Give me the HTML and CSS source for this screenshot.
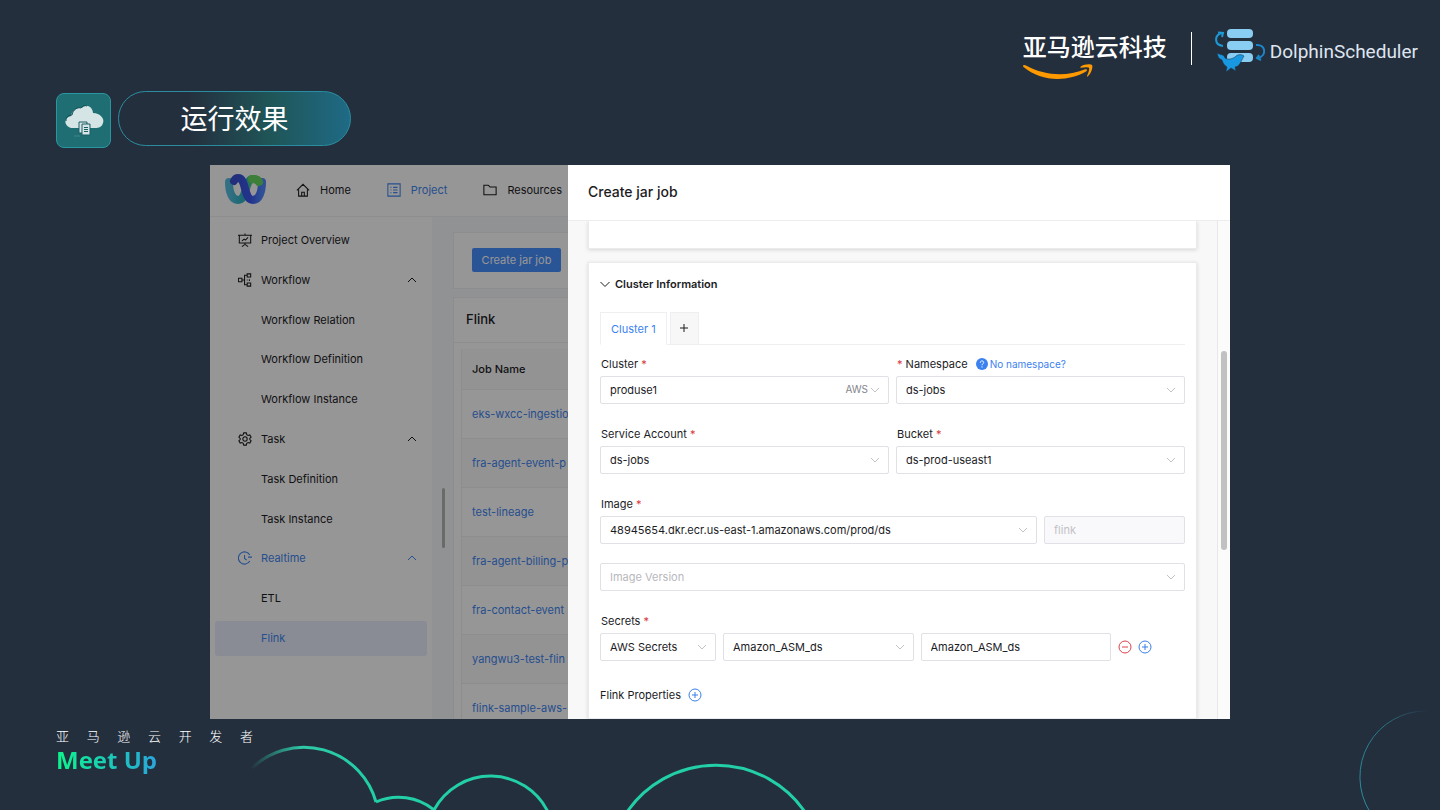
FILE: index.html
```html
<!DOCTYPE html>
<html lang="zh-CN">
<head>
    <meta charset="UTF-8">
    <meta name="viewport" content="width=device-width, initial-scale=1.0">
    <title>运行效果</title>
    <link rel="stylesheet" href="styles.css">
</head>
<body>
    <div class="slide">
        <header class="brand">
            <div class="aws">
                <span>亚马逊云科技</span>
                <svg class="smile" viewBox="0 0 70 16" width="70" height="16">
                    <path d="M0 1.500C1 0.500 2 1 3.500 1.800C22 12 44 12.500 61.500 5.500C64 4.500 65 6.300 63 7.500C45 18 18 18 0.500 3C0 2.500-0.300 2 0 1.500Z" fill="#f90"/>
                    <path d="M57.500 2.800C61 0 67.500-0.200 69 1C70.200 2.500 68.500 9.500 64.800 12.400C64.200 12.800 63.800 12.400 64 11.900C65 9.500 66.800 5.200 66 4C65.200 2.900 61 3.400 58 3.700C57.200 3.800 57 3.200 57.500 2.800Z" fill="#f90"/>
                </svg>
            </div>
            <div class="divider"></div>
            <div class="dolphin">
                <svg viewBox="0 0 50 44" width="50" height="44">
                    <g fill="#8acdf2">
                        <rect x="12" y="1" width="26" height="9" rx="4"/>
                        <rect x="12" y="13" width="26" height="9" rx="4"/>
                        <rect x="12" y="25" width="26" height="9" rx="4"/>
                    </g>
                    <path d="M8 18C-1 17 -1 7 7 5M3 4.500l5 0.500-1 4" fill="none" stroke="#1c9ad6" stroke-width="2"/>
                    <path d="M41 17C51 16 52 28 43 30M46 32l-4-2 2-3" fill="none" stroke="#1b87c9" stroke-width="2"/>
                    <path d="M2 25C5 27 9 26 10 30C13 32 17 31 20 29C23 26 26 26 29 28C27 31 26 35 23 38L20 39 21 43 16 40 11 44 12 39C9 37 8 35 7 32C4 31 3 29 2 25Z" fill="#1798e0" stroke="#242f3e" stroke-width="0.500"/>
                </svg>
                <span>DolphinScheduler</span>
            </div>
        </header>

        <div class="title-row">
            <div class="title-icon">
                <svg viewBox="0 0 54 54" width="54" height="54">
                    <path d="M14 34C7 32 6 24 14 22C15 16 21 13 25 14C29 9 36 13 36 19C43 19 48 25 46 29C45 33 42 34 38 34H17Z" fill="#d5e5e5"/>
                    <path d="M9 27C9 23 11 21 15 21C16 15 21 13 24 14C25 12 28 11 30 12" fill="none" stroke="#174f57" stroke-width="1"/>
                    <path d="M22 28h8v11h-8z" fill="#d5e5e5" stroke="#1d5d66" stroke-width="1"/>
                    <path d="M25 30h8v11h-8z" fill="#d5e5e5" stroke="#1d5d66" stroke-width="1"/>
                    <path d="M27 33.500h4M27 35.500h4M27 37.500h4" stroke="#1d5d66" stroke-width="1"/>
                    <path d="M17 42h6" stroke="#5fa3a5" stroke-width="0.500"/>
                </svg>
            </div>
            <h1>运行效果</h1>
        </div>

        <main class="app">
            <div class="page">
                <nav class="topbar">
                    <svg class="logo" viewBox="0 0 41 34" width="41" height="34">
                        <defs>
                            <linearGradient id="teal" x1="0" y1="0" x2="1" y2="0">
                                <stop offset="0" stop-color="#58bfe0"/>
                                <stop offset="0.450" stop-color="#2fb2c4"/>
                                <stop offset="1" stop-color="#68d860"/>
                            </linearGradient>
                            <linearGradient id="blue" x1="0" y1="0" x2="1" y2="0">
                                <stop offset="0" stop-color="#3b50d0"/>
                                <stop offset="0.600" stop-color="#3c58f0"/>
                                <stop offset="1" stop-color="#5088ff"/>
                            </linearGradient>
                        </defs>
                        <path d="M4 9C4 19 7 27 13 27C23 27 19 6 28 6C31 6 33 7 34 9" fill="none" stroke="url(#teal)" stroke-width="8" stroke-linecap="round"/>
                        <path d="M9 8C10 6 11 5 13 5C22 5 18 27 28 27C34 27 37 19 37 9" fill="none" stroke="url(#blue)" stroke-width="8" stroke-linecap="round"/>
                        <path d="M27 6C31 6 33 7 34 9" fill="none" stroke="#68d860" stroke-width="8" stroke-linecap="round"/>
                    </svg>
                    <a href="#">
                        <svg class="icon" viewBox="0 0 16 16"><path d="M1 8.500L8 1.500l7 7M3 7.500V15h10V7.500M6.500 15v-4.500h3V15"/></svg>
                        Home
                    </a>
                    <a href="#" class="active">
                        <svg class="icon" viewBox="0 0 16 16"><path d="M1 1h14v14H1zM4 5h1M4 8h1M4 11h1M7 5h5M7 8h5M7 11h5"/></svg>
                        Project
                    </a>
                    <a href="#">
                        <svg class="icon" viewBox="0 0 16 16"><path d="M1 2.500h5l2 2h7v9H1z"/></svg>
                        Resources
                    </a>
                </nav>
                <div class="columns">
                    <nav class="sidebar">
                        <a href="#" class="item">
                            <svg class="icon" viewBox="0 0 16 16"><path d="M0 2.500h16M1.500 2.500v9h13v-9M8 0.500v2M8 11.500v2M4.500 15.500L8 13l3.500 2.500M4.500 9l2.500-2 1.500 1L11.500 5"/></svg>
                            Project Overview
                        </a>
                        <a href="#" class="item">
                            <svg class="icon" viewBox="0 0 16 16"><path d="M0.500 6h4v4h-4zM4.500 8h3M10 2.500H7.500v11H10M10.500 1h4v3.500h-4zM10.500 11.500h4V15h-4zM10 8h1M13 7v2"/></svg>
                            Workflow
                            <svg class="chevron" viewBox="0 0 10 10"><path d="M1 7l4-4 4 4"/></svg>
                        </a>
                        <a href="#" class="item">Workflow Relation</a>
                        <a href="#" class="item">Workflow Definition</a>
                        <a href="#" class="item">Workflow Instance</a>
                        <a href="#" class="item">
                            <svg class="icon" viewBox="0 0 16 16"><path d="M6.500 1h3l0.500 2 1.500 1 2-0.700 1.500 2.600L13.500 7.300v1.400L15 10.100l-1.500 2.600-2-0.700L10 13l-0.500 2h-3L6 13l-1.500-1-2 0.700L1 10.100l1.500-1.400V7.300L1 5.900l1.500-2.600 2 0.700L6 3z"/><circle cx="8" cy="8" r="2.500"/></svg>
                            Task
                            <svg class="chevron" viewBox="0 0 10 10"><path d="M1 7l4-4 4 4"/></svg>
                        </a>
                        <a href="#" class="item">Task Definition</a>
                        <a href="#" class="item">Task Instance</a>
                        <a href="#" class="item active">
                            <svg class="icon" viewBox="0 0 16 16"><path d="M13.500 4.500A7 7 0 1 0 13.500 11.500M7.500 4.500V8.500L10 10.500M11.500 7h4.500"/></svg>
                            Realtime
                            <svg class="chevron" viewBox="0 0 10 10"><path d="M1 7l4-4 4 4"/></svg>
                        </a>
                        <a href="#" class="item">ETL</a>
                        <a href="#" class="item active selected">Flink</a>
                    </nav>
                    <div class="content">
                        <div class="page-thumb"></div>
                        <section class="panel toolbar">
                            <button type="button" class="primary">Create jar job</button>
                        </section>
                        <section class="panel jobs">
                            <h2>Flink</h2>
                            <table>
                                <thead>
                                    <tr><th>Job Name</th></tr>
                                </thead>
                                <tbody>
                                    <tr><td><a href="#">eks-wxcc-ingestio</a></td></tr>
                                    <tr><td><a href="#">fra-agent-event-p</a></td></tr>
                                    <tr><td><a href="#">test-lineage</a></td></tr>
                                    <tr><td><a href="#">fra-agent-billing-p</a></td></tr>
                                    <tr><td><a href="#">fra-contact-event</a></td></tr>
                                    <tr><td><a href="#">yangwu3-test-flin</a></td></tr>
                                    <tr><td><a href="#">flink-sample-aws-</a></td></tr>
                                </tbody>
                            </table>
                        </section>
                    </div>
                </div>
            </div>

            <aside class="drawer">
                <h2 class="drawer-title">Create jar job</h2>
                <div class="drawer-body">
                    <div class="cards">
                        <section class="card card-empty"></section>
                        <section class="card card-cluster">
                            <h3>
                                <svg class="chevron" viewBox="0 0 10 10"><path d="M0.500 3L5 7.500 9.500 3"/></svg>
                                Cluster Information
                            </h3>
                            <div class="tabs">
                                <button type="button" class="tab">Cluster 1</button>
                                <button type="button" class="tab-add" aria-label="Add cluster">
                                    <svg viewBox="0 0 10 10" width="10" height="10"><path d="M5 1v8M1 5h8"/></svg>
                                </button>
                            </div>
                            <form class="form">
                                <div class="row two">
                                    <div class="field">
                                        <label for="cluster">Cluster <i>*</i></label>
                                        <div class="select">
                                            <select id="cluster"><option>produse1</option></select>
                                            <span class="suffix">AWS</span>
                                            <svg class="arrow" viewBox="0 0 10 10"><path d="M1 3l4 4 4-4"/></svg>
                                        </div>
                                    </div>
                                    <div class="field">
                                        <div class="label-row">
                                            <label for="namespace"><i>*</i> Namespace</label>
                                            <a href="#" class="help">
                                                <svg viewBox="0 0 12 12" width="12" height="12"><circle cx="6" cy="6" r="6" fill="#3b82f0"/><path d="M4.300 4.700C4.300 2.300 7.800 2.400 7.700 4.600C7.700 5.700 6 5.700 6 7.200M6 8.300v1.200" fill="none" stroke="#fff" stroke-width="1"/></svg>
                                                No namespace?
                                            </a>
                                        </div>
                                        <div class="select">
                                            <select id="namespace"><option>ds-jobs</option></select>
                                            <svg class="arrow" viewBox="0 0 10 10"><path d="M1 3l4 4 4-4"/></svg>
                                        </div>
                                    </div>
                                </div>
                                <div class="row two">
                                    <div class="field">
                                        <label for="account">Service Account <i>*</i></label>
                                        <div class="select">
                                            <select id="account"><option>ds-jobs</option></select>
                                            <svg class="arrow" viewBox="0 0 10 10"><path d="M1 3l4 4 4-4"/></svg>
                                        </div>
                                    </div>
                                    <div class="field">
                                        <label for="bucket">Bucket <i>*</i></label>
                                        <div class="select">
                                            <select id="bucket"><option>ds-prod-useast1</option></select>
                                            <svg class="arrow" viewBox="0 0 10 10"><path d="M1 3l4 4 4-4"/></svg>
                                        </div>
                                    </div>
                                </div>
                                <div class="field">
                                    <label for="image">Image <i>*</i></label>
                                    <div class="row image">
                                        <div class="select">
                                            <select id="image"><option>48945654.dkr.ecr.us-east-1.amazonaws.com/prod/ds</option></select>
                                            <svg class="arrow" viewBox="0 0 10 10"><path d="M1 3l4 4 4-4"/></svg>
                                        </div>
                                        <input type="text" value="flink" aria-label="Image name" disabled>
                                    </div>
                                </div>
                                <div class="select">
                                    <select class="placeholder" aria-label="Image Version"><option>Image Version</option></select>
                                    <svg class="arrow" viewBox="0 0 10 10"><path d="M1 3l4 4 4-4"/></svg>
                                </div>
                                <div class="field">
                                    <label for="secrets">Secrets <i>*</i></label>
                                    <div class="row secrets">
                                        <div class="select">
                                            <select id="secrets"><option>AWS Secrets</option></select>
                                            <svg class="arrow" viewBox="0 0 10 10"><path d="M1 3l4 4 4-4"/></svg>
                                        </div>
                                        <div class="select">
                                            <select aria-label="Secret"><option>Amazon_ASM_ds</option></select>
                                            <svg class="arrow" viewBox="0 0 10 10"><path d="M1 3l4 4 4-4"/></svg>
                                        </div>
                                        <input type="text" value="Amazon_ASM_ds" aria-label="Secret name">
                                        <div class="actions">
                                            <button type="button" class="round remove" aria-label="Remove secret">
                                                <svg viewBox="0 0 14 14" width="14" height="14"><circle cx="7" cy="7" r="6"/><path d="M4 7h6"/></svg>
                                            </button>
                                            <button type="button" class="round" aria-label="Add secret">
                                                <svg viewBox="0 0 14 14" width="14" height="14"><circle cx="7" cy="7" r="6"/><path d="M4 7h6M7 4v6"/></svg>
                                            </button>
                                        </div>
                                    </div>
                                </div>
                                <div class="properties">
                                    Flink Properties
                                    <button type="button" class="round" aria-label="Add property">
                                        <svg viewBox="0 0 14 14" width="14" height="14"><circle cx="7" cy="7" r="6"/><path d="M4 7h6M7 4v6"/></svg>
                                    </button>
                                </div>
                            </form>
                        </section>
                    </div>
                    <div class="track"><div class="thumb"></div></div>
                </div>
            </aside>
        </main>

        <footer class="footer">
            <svg class="clouds" viewBox="250 740 560 70" width="560" height="70">
                <defs>
                    <linearGradient id="fade" gradientUnits="userSpaceOnUse" x1="250" y1="0" x2="380" y2="0">
                        <stop offset="0" stop-color="#2fc9a8" stop-opacity="0"/>
                        <stop offset="0.400" stop-color="#2fc9a8"/>
                        <stop offset="1" stop-color="#1fd0a4"/>
                    </linearGradient>
                </defs>
                <path d="M252 768A75 75 0 0 1 376 802" stroke="url(#fade)"/>
                <path d="M376 802A56 56 0 0 1 434 810A64 64 0 0 1 548 812M627 812A108 108 0 0 1 805 812" stroke="#22cfa6"/>
            </svg>
            <svg class="ring" viewBox="1358 709 82 101" width="82" height="101">
                <defs>
                    <linearGradient id="ringFade" x1="0" y1="1" x2="1" y2="0">
                        <stop offset="0" stop-color="#2a8fa0"/>
                        <stop offset="0.600" stop-color="#2a7484"/>
                        <stop offset="1" stop-color="#2a7484" stop-opacity="0"/>
                    </linearGradient>
                </defs>
                <path d="M1370 812A66 66 0 0 1 1428 711" fill="none" stroke="url(#ringFade)"/>
            </svg>
            <p class="community">亚 马 逊 云 开 发 者</p>
            <p class="meetup">Meet Up</p>
        </footer>
    </div>
</body>
</html>
```
FILE: styles.css
```css
* {
    box-sizing: border-box;
}
body {
    margin: 0;
    background: #242f3e;
    font-family: Inter, "Noto Sans CJK SC", sans-serif;
    font-size: 11px;
    color: #1c1c1f;
}
h1, h2, h3, p {
    margin: 0;
}
a {
    color: inherit;
    text-decoration: none;
}
button, input, select {
    font: inherit;
    color: inherit;
}
.slide {
    display: flex;
    flex-direction: column;
    height: 100vh;
    min-height: 600px;
    overflow: hidden;
}

/* brand */
.brand {
    display: flex;
    justify-content: flex-end;
    height: 91px;
    padding: 28px 22px 0 0;
    color: #fff;
}
.aws {
    display: flex;
    flex-direction: column;
    font: 500 24px/36px "Noto Sans CJK SC", sans-serif;
}
.divider {
    width: 1px;
    height: 33px;
    margin: 4px 23px 0 24px;
    background: #fff;
}
.dolphin {
    display: flex;
    gap: 5px;
    font: 19px/48px Roboto, sans-serif;
    color: #dfe5ee;
}

/* title */
.title-row {
    display: flex;
    gap: 7px;
    padding: 0 56px 19px;
}
.title-icon {
    width: 55px;
    height: 55px;
    margin: 2px 0 -2px;
    border: 1px solid #2a97a0;
    border-radius: 8px;
    background: #1f6e74;
    overflow: hidden;
}
h1 {
    width: 233px;
    height: 55px;
    border: 1px solid #2a8d9f;
    border-radius: 28px;
    background: linear-gradient(90deg, #242f3e 30%, #1f5557 65%, #1f6a85);
    font: 400 27px/52px "Noto Sans CJK SC", sans-serif;
    text-align: center;
    color: #fff;
}

/* app */
.app {
    display: flex;
    flex: 1;
    min-height: 0;
    margin: 0 210px;
    background: #fff;
}
.page {
    position: relative;
    display: flex;
    flex-direction: column;
    flex: none;
    width: 358px;
    overflow: hidden;
    background: #fff;
}
.page::after {
    content: "";
    position: absolute;
    inset: 0;
    background: rgba(0, 0, 0, 0.41);
    pointer-events: none;
}
.icon {
    flex: none;
    width: 14px;
    height: 14px;
    fill: none;
    stroke: currentColor;
    stroke-width: 1.2;
}
.chevron {
    width: 10px;
    height: 10px;
    fill: none;
    stroke: currentColor;
}
.topbar {
    display: flex;
    flex: none;
    align-items: center;
    gap: 36px;
    height: 52px;
    padding: 0 0 2px 15px;
    border-bottom: 1px solid #f2f2f5;
}
.topbar a {
    display: flex;
    align-items: center;
    gap: 10px;
    white-space: nowrap;
}
.topbar .logo {
    flex: none;
    margin-right: -6px;
}
.active {
    color: #4286f0;
}
.columns {
    display: flex;
    flex: 1;
    min-height: 0;
}
.sidebar {
    display: grid;
    flex: none;
    grid-auto-rows: 1fr;
    align-items: center;
    width: 222px;
    height: 438px;
    margin-top: 3px;
}
.item {
    display: flex;
    align-items: center;
    gap: 9px;
    height: 35px;
    margin: 0 5px;
    padding: 0 10px 0 46px;
    border-radius: 3px;
}
.item .icon {
    margin-left: -23px;
}
.item .chevron {
    margin-left: auto;
}
.selected {
    background: #e9effc;
}
.content {
    position: relative;
    flex: 1;
    min-width: 0;
    padding: 15px 0 0 21px;
    background: #f7f8fa;
}
.page-thumb {
    position: absolute;
    left: 10px;
    top: 271px;
    width: 3px;
    height: 60px;
    border-radius: 2px;
    background: #b4b4b6;
}
.panel {
    border: 1px solid #f0f0f4;
    border-right: 0;
    background: #fff;
}
.toolbar {
    height: 57px;
    margin-bottom: 8px;
    padding: 15px 18px;
}
.primary {
    display: block;
    width: 89px;
    height: 24px;
    padding: 0;
    border: 0;
    border-radius: 2px;
    background: #4790ff;
    color: #fff;
    white-space: nowrap;
}
.jobs h2 {
    height: 45px;
    padding-left: 12px;
    border-bottom: 1px solid #f0f0f4;
    font-size: 13px;
    font-weight: 500;
    line-height: 43px;
}
table {
    width: calc(100% - 7px);
    margin: 6px 0 0 7px;
    border-left: 1px solid #f0f0f4;
    border-spacing: 0;
}
th, td {
    height: 49px;
    padding: 0 0 0 10px;
    border-bottom: 1px solid #f0f0f4;
    text-align: left;
    white-space: nowrap;
}
th {
    height: 41px;
    background: #fafafc;
    font-weight: 500;
}
td {
    color: #4286f0;
}
tr:nth-child(even) td {
    background: #fafafc;
}

/* drawer */
.drawer {
    display: flex;
    flex-direction: column;
    flex: 1;
    min-width: 0;
    background: #fff;
}
.drawer-title {
    flex: none;
    height: 56px;
    padding-left: 20px;
    border-bottom: 1px solid #ededf0;
    font-size: 14px;
    font-weight: 500;
    line-height: 54px;
}
.drawer-body {
    display: flex;
    flex: 1;
    min-height: 0;
    overflow: hidden;
    background: #f8f8f8;
}
.cards {
    display: flex;
    flex-direction: column;
    flex: 1;
    gap: 13px;
    padding: 0 20px;
}
.card {
    border: 1px solid #ebebed;
    background: #fff;
    box-shadow: 0 1px 4px rgba(0, 0, 0, 0.14);
}
.card-empty {
    flex: none;
    height: 28px;
    border-top: 0;
}
.card-cluster {
    flex: 1;
    padding: 0 11px;
}
h3 {
    display: flex;
    align-items: center;
    gap: 5px;
    height: 41px;
    font-size: 11px;
    font-weight: 600;
}
.tabs {
    display: flex;
    gap: 3px;
    height: 33px;
    margin-top: 8px;
    border-bottom: 1px solid #efeff2;
}
.tab, .tab-add {
    height: 33px;
    padding: 0 10px;
    border: 1px solid #efeff2;
    border-bottom-color: #fff;
    background: #fff;
    color: #3b82f0;
}
.tab-add {
    width: 29px;
    height: 32px;
    padding: 0;
    border-bottom: 0;
    background: #f7f7f8;
    color: #1c1c1f;
}
.tab-add svg, .round svg {
    fill: none;
    stroke: currentColor;
}
.form {
    display: flex;
    flex-direction: column;
    padding-top: 7px;
}
.row {
    display: grid;
    gap: 7px;
}
.two {
    grid-template-columns: 1fr 1fr;
    margin-bottom: 18px;
}
.image {
    grid-template-columns: 1fr 141px;
    margin-bottom: 19px;
}
.secrets {
    grid-template-columns: 116px 1fr 1fr 67px;
}
label {
    display: block;
    height: 24px;
    padding-left: 1px;
    line-height: 24px;
    white-space: nowrap;
}
label i {
    font-style: normal;
    color: #d9363e;
}
.label-row {
    display: flex;
    gap: 8px;
}
.help {
    display: flex;
    align-items: center;
    gap: 2px;
    height: 24px;
    font-size: 10px;
    color: #3b82f0;
}
.select {
    position: relative;
}
.select + .field {
    margin-top: 18px;
}
select, input {
    display: block;
    width: 100%;
    height: 28px;
    margin: 0;
    padding: 0 9px;
    border: 1px solid #e0e0e6;
    border-radius: 2px;
    background: #fff;
    appearance: none;
    outline: none;
}
input:disabled {
    background: #f9f9fb;
    color: #c2c2c6;
}
.placeholder {
    color: #b8b8bd;
}
.arrow {
    position: absolute;
    right: 9px;
    top: 9px;
    width: 10px;
    height: 10px;
    fill: none;
    stroke: #c2c2c8;
    pointer-events: none;
}
.suffix {
    position: absolute;
    right: 21px;
    top: 7px;
    font-size: 10px;
    line-height: 13px;
    color: #85858c;
    pointer-events: none;
}
.actions {
    display: flex;
    align-items: center;
    gap: 6px;
}
.round {
    display: block;
    width: 14px;
    height: 14px;
    padding: 0;
    border: 0;
    background: none;
    color: #3b7fe8;
}
.round svg {
    display: block;
}
.remove {
    color: #d9444c;
}
.properties {
    display: flex;
    align-items: center;
    gap: 7px;
    height: 28px;
    margin-top: 20px;
}
.track {
    flex: none;
    width: 13px;
    padding: 130px 3px 0;
    border-left: 1px solid #e8e8e8;
    background: #fbfbfb;
}
.thumb {
    width: 6px;
    height: 199px;
    border-radius: 3px;
    background: #c1c1c1;
}

/* footer */
.footer {
    position: relative;
    flex: none;
    height: 91px;
    padding: 7px 56px 0;
}
.clouds {
    position: absolute;
    left: 250px;
    bottom: 0;
    fill: none;
    stroke-width: 3;
}
.ring {
    position: absolute;
    right: 0;
    bottom: 0;
}
.community {
    width: 197px;
    font: 300 13px/20px "Noto Sans CJK SC", sans-serif;
    text-align-last: justify;
    color: #fff;
}
.meetup {
    width: max-content;
    font: 700 24px/28px "Open Sans", sans-serif;
    background: linear-gradient(90deg, #0cf58c, #2aa5dc);
    background-clip: text;
    -webkit-background-clip: text;
    color: transparent;
}
```
